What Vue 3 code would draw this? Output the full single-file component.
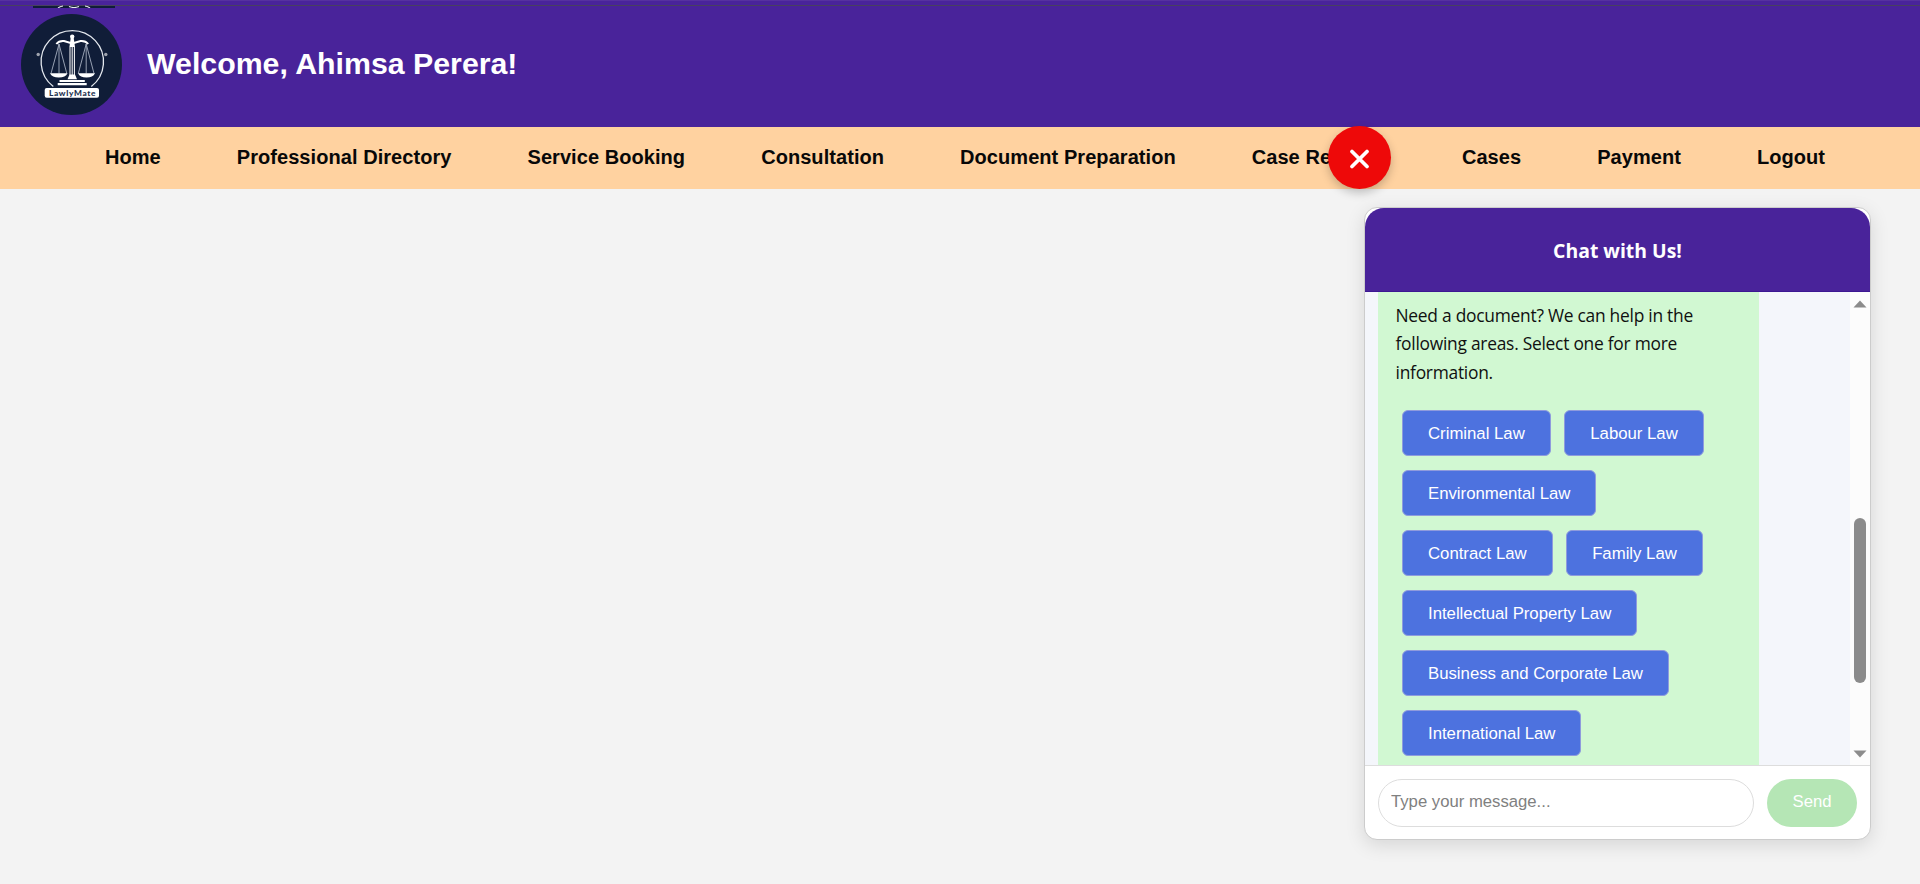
<script setup>
const links = ['Home', 'Professional Directory', 'Service Booking', 'Consultation', 'Document Preparation', 'Case Reviews', 'Cases', 'Payment', 'Logout']
const lines = ['Need a document? We can help in the', 'following areas. Select one for more', 'information.']
const rows = [
  ['Criminal Law', 'Labour Law'],
  ['Environmental Law'],
  ['Contract Law', 'Family Law'],
  ['Intellectual Property Law'],
  ['Business and Corporate Law'],
  ['International Law'],
]
</script>

<template>
  <div class="page">
    <header class="header">
      <svg class="sliver" width="82" height="3" viewBox="0 0 82 3">
        <path d="M0 1H82V3H0Z" fill="#101d38" />
        <path d="M25 3Q27 1.500 30 1M57 3Q55 1.500 52 1M36 1.500Q41 3.500 46 1.500" stroke="#e8eaf0" stroke-width="1.2" fill="none" />
      </svg>
      <svg class="logo" width="101" height="101" viewBox="0 0 101 101">
        <circle cx="50.5" cy="50.5" r="50.5" fill="#101d38" />
        <path d="M32.300 72.500A31.200 31.200 0 1 1 70.300 72.500" fill="none" stroke="#e4e8ee" stroke-width="1.3" />
        <g fill="none" stroke="#fff">
          <path d="M35.300 30Q38 26.500 43 27L51.200 29.500 59.500 27Q64.500 26.500 67.200 30" stroke-width="1.900" />
          <path d="M38 30L30 59.500M38 30V59.500M38 30L45.800 59.500M65.200 30L57.300 59.500M65.200 30V59.500M65.200 30L73 59.500" stroke-width=".9" stroke="#a6afbf" />
          <path d="M49 33V61M51.200 33V61M53.400 33V61" stroke-width="1" />
        </g>
        <g fill="#fff">
          <circle cx="51.200" cy="22.600" r="2.200" />
          <path d="M49.700 24H52.700L54 33H48.400Z" />
          <path d="M29 59.300H46.500Q44.500 63.600 37.800 63.600T29 59.300ZM57 59.300H74Q72 63.600 65.500 63.600T57 59.300Z" />
          <path d="M48.500 60.500H54L56 65.300H46.500ZM38.500 66H63.800V68H38.500ZM36.700 69H65.700V71.200H36.700Z" />
          <circle cx="17.200" cy="40.500" r="1.700" opacity=".6" />
          <circle cx="84.800" cy="40.500" r="1.700" opacity=".6" />
          <rect x="23.700" y="74" width="54.300" height="9.800" rx="2" />
        </g>
        <text x="28" y="81.600" class="logo-name" textLength="46.500">LawlyMate</text>
      </svg>
      <h1>Welcome, Ahimsa Perera!</h1>
    </header>
    <nav class="nav"><a v-for="l in links" :key="l">{{ l }}</a></nav>

    <button class="close" aria-label="Close chat">
      <svg width="20" height="20" viewBox="0 0 20 20"><path d="M2 2.500L17 17.500M17 2.500L2 17.500" stroke="#fff" stroke-width="3.700" stroke-linecap="round" /></svg>
    </button>

    <section class="chat">
      <div class="chat-head">Chat with Us!</div>
      <div class="chat-body">
        <div class="bubble">
          <p><span v-for="t in lines" :key="t">{{ t }}</span></p>
          <div class="options">
            <div v-for="(r, i) in rows" :key="i" class="row">
              <button v-for="b in r" :key="b">{{ b }}</button>
            </div>
          </div>
        </div>
        <div class="scrollbar">
          <svg width="14" height="8" viewBox="0 0 14 8"><path d="M0.500 7.500L7 .5 13.500 7.500Z" fill="#8b8b8b" /></svg>
          <div class="thumb"></div>
          <svg class="down" width="14" height="8" viewBox="0 0 14 8"><path d="M0.500 .5L7 7.500 13.500 .5Z" fill="#8b8b8b" /></svg>
        </div>
      </div>
      <div class="composer">
        <input type="text" placeholder="Type your message..." />
        <button>Send</button>
      </div>
    </section>
  </div>
</template>

<style>
body { margin: 0; background: #f3f3f3; overflow: hidden; }
</style>
<style scoped>
.page { position: relative; height: 884px; overflow: hidden; background: #f3f3f3; font-family: "Liberation Sans", Arial, sans-serif; }
.page * { box-sizing: border-box; }
button { border: 0; padding: 0; font-family: inherit; }
.header { position: relative; height: 127px; display: flex; align-items: center; padding: 2px 0 0 21px; gap: 25px; background: linear-gradient(#56319f 0 1px, #49239a 1px 5px, #48405f 5px 6px, #49239a 6px); }
.sliver { position: absolute; left: 33px; top: 5px; }
.logo { display: block; }
.logo-name { font: 900 8.300px Lato, sans-serif; fill: #22304e; }
h1 { margin: 0; padding-bottom: 2px; font-size: 30.300px; line-height: 36px; color: #fff; }
.nav { height: 62px; display: flex; justify-content: center; align-items: center; gap: 76px; padding: 0 0 2px 10px; background: #ffd2a0; font-size: 20px; letter-spacing: .06px; font-weight: bold; color: #080808; white-space: nowrap; }
.close { position: absolute; left: 1328px; top: 126px; width: 63px; height: 63px; border-radius: 50%; background: #ee0909; display: grid; place-items: center; padding-top: 3px; box-shadow: 0 4px 10px rgba(0,0,0,.22); }
.chat { position: absolute; left: 1364px; top: 207px; width: 507px; height: 633px; display: flex; flex-direction: column; background: #fff; border: 1px solid #ccc; border-radius: 13px; box-shadow: 0 5px 19px rgba(0,0,0,.12); overflow: hidden; }
.chat-head { height: 84px; flex: none; display: grid; place-items: center; padding-top: 2px; background: #49239a; border-bottom: 1px solid #3c1792; border-radius: 19px 19px 0 0; color: #fff; font: bold 19.400px "Open Sans", sans-serif; }
.chat-body { height: 473px; flex: none; display: flex; justify-content: space-between; background: #f4f6fb; padding-left: 13px; }
.bubble { width: 381px; background: #d1f8d2; padding: 9px 0 0 17.500px; }
p { margin: 0; font: 17.400px/28.300px "Open Sans", sans-serif; letter-spacing: -.26px; color: #101010; }
p span { display: block; white-space: nowrap; }
.options { display: flex; flex-direction: column; gap: 14px; padding: 24.200px 0 0 6.500px; }
.row { display: flex; gap: 14px; }
.row button { height: 46px; padding: 1px 25px 0; border: 1px solid #8f9bdd; border-radius: 6px; background: #4d72df; color: #fff; font-size: 16.800px; letter-spacing: -.02px; }
.row button + button { margin-left: -.5px; }
.scrollbar { width: 20px; background: #fcfcfc; display: flex; flex-direction: column; align-items: center; padding: 8px 0 7px; }
.thumb { width: 12px; height: 165px; margin-top: 210px; border-radius: 6px; background: #8b8b8b; }
.down { margin-top: auto; }
.composer { flex: 1; display: flex; align-items: flex-start; gap: 13px; padding: 13px 12px 0 13px; border-top: 1px solid #ddd; }
.composer input { width: 376px; flex: none; height: 48px; padding: 0 12px 2px; border: 1px solid #ddd; border-radius: 25px; background: #fff; outline: 0; font: 16.700px "Liberation Sans", sans-serif; }
.composer input::placeholder { color: #808080; opacity: 1; }
.composer button { width: 90px; height: 48px; padding-bottom: 2px; border-radius: 25px; background: #b5e6b5; color: #fff; font-size: 16.700px; }
</style>
